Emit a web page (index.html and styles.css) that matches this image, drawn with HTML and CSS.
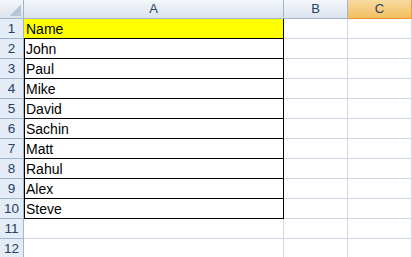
FILE: index.html
```html
<!DOCTYPE html>
<html lang="en">
<head>
  <meta charset="UTF-8">
  <title>Sheet1</title>
  <link rel="stylesheet" href="styles.css">
</head>
<body>
  <div class="sheet">
    <div class="corner"></div>
    <div class="col-head">A</div>
    <div class="col-head">B</div>
    <div class="col-head selected">C</div>

    <div class="row-head">1</div>
    <div class="cell name first">Name</div>
    <div class="cell"></div>
    <div class="cell"></div>

    <div class="row-head">2</div>
    <div class="cell name">John</div>
    <div class="cell"></div>
    <div class="cell"></div>

    <div class="row-head">3</div>
    <div class="cell name">Paul</div>
    <div class="cell"></div>
    <div class="cell"></div>

    <div class="row-head">4</div>
    <div class="cell name">Mike</div>
    <div class="cell"></div>
    <div class="cell"></div>

    <div class="row-head">5</div>
    <div class="cell name">David</div>
    <div class="cell"></div>
    <div class="cell"></div>

    <div class="row-head">6</div>
    <div class="cell name">Sachin</div>
    <div class="cell"></div>
    <div class="cell"></div>

    <div class="row-head">7</div>
    <div class="cell name">Matt</div>
    <div class="cell"></div>
    <div class="cell"></div>

    <div class="row-head">8</div>
    <div class="cell name">Rahul</div>
    <div class="cell"></div>
    <div class="cell"></div>

    <div class="row-head">9</div>
    <div class="cell name">Alex</div>
    <div class="cell"></div>
    <div class="cell"></div>

    <div class="row-head">10</div>
    <div class="cell name">Steve</div>
    <div class="cell"></div>
    <div class="cell"></div>

    <div class="row-head">11</div>
    <div class="cell"></div>
    <div class="cell"></div>
    <div class="cell"></div>

    <div class="row-head">12</div>
    <div class="cell"></div>
    <div class="cell"></div>
    <div class="cell"></div>
  </div>
</body>
</html>
```

FILE: styles.css
```css
body {
  margin: 0;
  background: #fff;
  overflow: hidden;
  font-family: "Liberation Sans", Arial, sans-serif;
}

.sheet {
  display: grid;
  grid-template-columns: 24px 260px 64px 64px;
  grid-template-rows: 19px;
  grid-auto-rows: 20px;
}

.sheet > div {
  box-sizing: border-box;
  border-right: 1px solid #d0d7e5;
  border-bottom: 1px solid #d0d7e5;
}

.corner {
  background:
    linear-gradient(135deg, transparent 50%, #b7c6da 50%) right 2px bottom 2px / 11px 11px no-repeat,
    linear-gradient(#f3f6fa, #dde4ee);
  border-color: #9eb6ce !important;
}

.col-head {
  background: linear-gradient(#f4f7fb, #dce3ed);
  border-color: #9eb6ce !important;
  color: #27415f;
  font-size: 13px;
  line-height: 18px;
  text-align: center;
}

.col-head.selected {
  background: linear-gradient(#f9daa2, #f1c05e);
  border-right-color: #f29536 !important;
  border-bottom-color: #f29536 !important;
}

.row-head {
  background: #e4ecf7;
  border-color: #9eb6ce !important;
  color: #27415f;
  font-size: 13.5px;
  line-height: 20px;
  text-align: center;
}

.cell {
  color: #000;
  font-size: 14px;
  line-height: 20px;
  padding-left: 2px;
}

.name {
  border-left: 1px solid #000;
  border-right-color: #000 !important;
  border-bottom-color: #000 !important;
  padding-left: 1px;
}

.name.first {
  background: #ffff00;
  border-left: none;
  padding-left: 2px;
}
```
